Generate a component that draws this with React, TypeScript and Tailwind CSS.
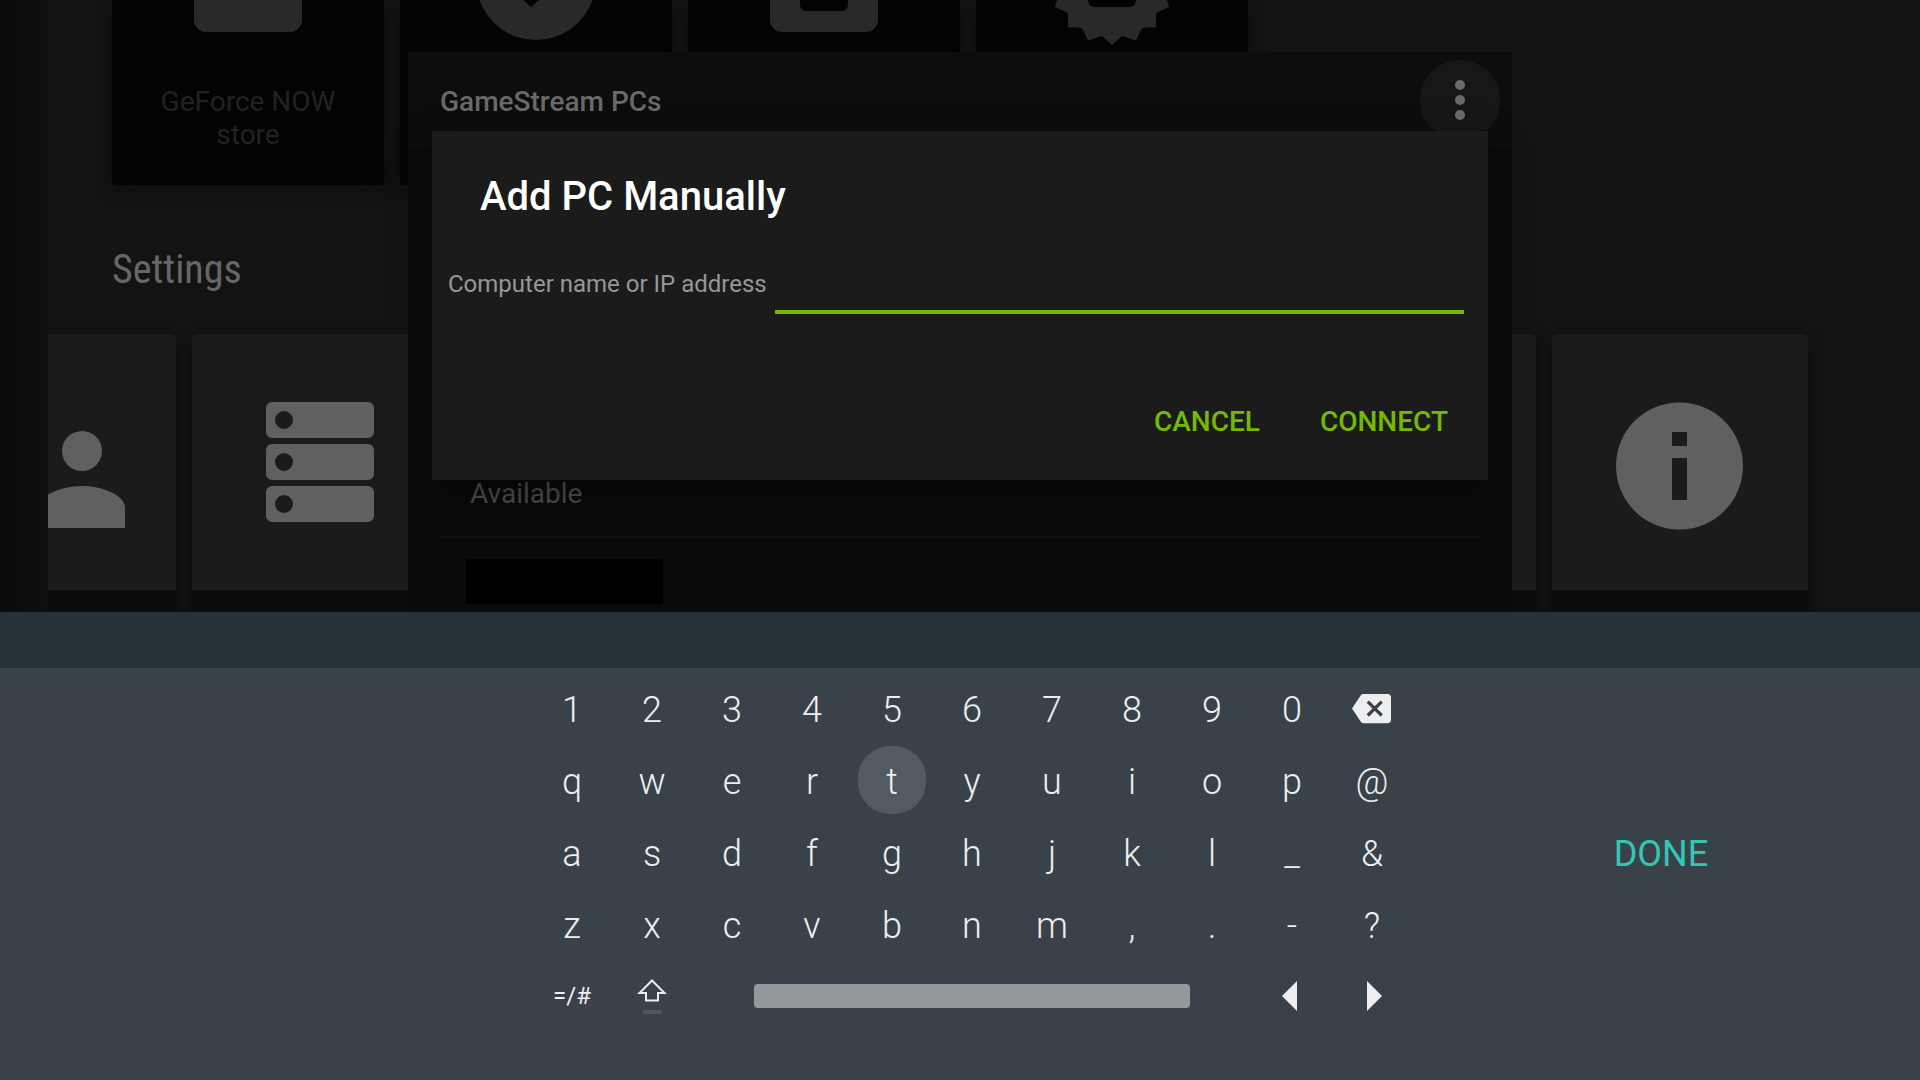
import React from "react";
import { MdBackspace } from "react-icons/md";

function BagIcon() {
  return (
    <svg className="h-12 w-36" viewBox="0 0 144 48" fill="currentColor" aria-hidden="true">
      <path d="M18 0H126V20a12 12 0 0 1-12 12H30a12 12 0 0 1-12-12Z" />
    </svg>
  );
}

function CheckIcon() {
  return (
    <svg className="h-12 w-36" viewBox="0 0 144 48" fill="currentColor" aria-hidden="true">
      <path d="M15.4 0A60 60 0 0 0 128.6 0H75L67 7 59 0Z" />
    </svg>
  );
}

function FrameIcon() {
  return (
    <svg className="h-12 w-36" viewBox="0 0 144 48" fill="currentColor" aria-hidden="true">
      <path d="M18 0H48V5a6 6 0 0 0 6 6H90a6 6 0 0 0 6-6V0H126V20a12 12 0 0 1-12 12H30a12 12 0 0 1-12-12Z" />
    </svg>
  );
}

function BadgeIcon() {
  return (
    <svg className="h-12 w-36" viewBox="0 0 144 48" fill="currentColor" aria-hidden="true">
      <path d="M17 0 15 7 28 13V27L42 28 48 40.500 62 36 72 45 82 36 96 40.500 102 28 116 27V13L129 7 127 0H96V1a6 6 0 0 1-6 6H54a6 6 0 0 1-6-6V0Z" />
    </svg>
  );
}

function AccountsIcon() {
  return (
    <svg className="h-[132px] w-[160px]" viewBox="0 0 160 132" fill="currentColor" aria-hidden="true">
      <circle cx="46" cy="36" r="20" />
      <circle cx="114" cy="51" r="20" />
      <path d="M71 128V108C71 94 96 86 114 86S157 94 157 108V128Z" />
    </svg>
  );
}

function StorageIcon() {
  return (
    <svg className="h-[132px] w-[132px]" viewBox="0 0 132 132" fill="currentColor" aria-hidden="true">
      {[2, 44, 86].map((y) => (
        <path
          key={y}
          fillRule="evenodd"
          d={`M18 ${y}H114a6 6 0 0 1 6 6v24a6 6 0 0 1-6 6H18a6 6 0 0 1-6-6v-24a6 6 0 0 1 6-6ZM30 ${y + 9}a9 9 0 1 0 0 18a9 9 0 0 0 0-18Z`}
        />
      ))}
    </svg>
  );
}

function InfoIcon() {
  return (
    <svg className="h-[132px] w-[132px]" viewBox="0 0 132 132" fill="currentColor" aria-hidden="true">
      <path
        fillRule="evenodd"
        d="M65.500 2.500a63.500 63.500 0 1 0 0 127a63.500 63.500 0 0 0 0-127ZM58 32H73V46H58ZM58 58H73V100H58Z"
      />
    </svg>
  );
}

function MoreIcon() {
  return (
    <svg className="size-10" viewBox="0 0 40 40" fill="currentColor" aria-hidden="true">
      <circle cx="20" cy="5" r="5" />
      <circle cx="20" cy="20" r="5" />
      <circle cx="20" cy="35" r="5" />
    </svg>
  );
}

const apps = [
  { label: "GeForce NOW store", icon: <BagIcon /> },
  { label: "", icon: <CheckIcon /> },
  { label: "", icon: <FrameIcon /> },
  { label: "", icon: <BadgeIcon /> },
];

const settings = [
  { name: "Accounts", icon: <AccountsIcon /> },
  { name: "Storage", icon: <StorageIcon /> },
  { name: "Setting 3", icon: null },
  { name: "Setting 4", icon: null },
  { name: "Setting 5", icon: null },
  { name: "Setting 6", icon: null },
  { name: "About", icon: <InfoIcon /> },
];

function Home() {
  return (
    <div className="flex h-full">
      <div className="w-12 shrink-0 bg-linear-to-r from-[#0b0b0b] to-[#0f0f0f]" />
      <div className="min-w-0 flex-1 overflow-hidden">
        <div className="flex gap-4 pl-16">
          {apps.map((app, i) => (
            <button
              key={i}
              aria-label={app.label || "App " + (i + 1)}
              className="flex h-[185px] w-[272px] shrink-0 flex-col items-center rounded-b bg-[#030303] text-[#292929] shadow-[0_6px_16px_rgba(0,0,0,0.4)]"
            >
              {app.icon}
              <span className="mt-[37px] w-48 text-center text-[28px] leading-[33px] text-[#222222]">
                {app.label}
              </span>
            </button>
          ))}
        </div>
        <h2 className="mt-[61px] pl-16 font-['Roboto_Condensed',Roboto,sans-serif] text-[40px] leading-12 text-[#676767]">
          Settings
        </h2>
        <div className="mt-10 -ml-32 flex gap-4">
          {settings.map((s) => (
            <button
              key={s.name}
              aria-label={s.name}
              className="flex h-[340px] w-64 shrink-0 flex-col overflow-hidden rounded bg-[#0c0c0c] shadow-[0_6px_16px_rgba(0,0,0,0.4)]"
            >
              <span className="flex h-64 w-full items-center justify-center bg-[#1b1b1b] pt-2 text-[#606060]">
                {s.icon}
              </span>
            </button>
          ))}
        </div>
      </div>
    </div>
  );
}

function PcPanel() {
  return (
    <section className="flex h-[560px] w-[1104px] flex-col bg-[#0a0a0a]">
      <header className="flex h-24 shrink-0 items-center justify-between bg-[#0d0d0d] pr-3 pl-8">
        <h2 className="pt-1 text-[28px] font-medium text-[#6a6a6a]">GameStream PCs</h2>
        <button
          aria-label="More options"
          className="flex size-20 items-center justify-center rounded-full bg-[#171717] text-[#6a6a6a]"
        >
          <MoreIcon />
        </button>
      </header>
      <div className="flex flex-1 flex-col justify-end px-[30px] pb-2">
        <h3 className="border-b-2 border-[#11110c] pb-[18px] pl-8 text-[28px] leading-12 text-[#505050]">
          Available
        </h3>
        <div className="mt-[21px] ml-7 h-[45px] w-[197px] bg-black" />
      </div>
    </section>
  );
}

function AddPcDialog() {
  return (
    <form
      role="dialog"
      aria-labelledby="add-pc-title"
      onSubmit={(e) => e.preventDefault()}
      className="w-[1056px] bg-[#1b1b1b] pt-[41px] pb-[34px] shadow-[0_16px_40px_rgba(0,0,0,0.4)]"
    >
      <h1 id="add-pc-title" className="pl-12 text-[40px] leading-[50px] font-medium text-white">
        Add PC Manually
      </h1>
      <div className="mt-8 flex items-center gap-2 pr-6 pl-4">
        <label htmlFor="pc-address" className="text-2xl text-[#979797]">
          Computer name or IP address
        </label>
        <input
          id="pc-address"
          type="text"
          className="h-[60px] min-w-0 flex-1 border-b-4 border-[#76b900] bg-transparent text-2xl text-white outline-none"
        />
      </div>
      <div className="mt-[84px] flex justify-end gap-3 pr-4 text-[28px] font-medium text-[#76b900]">
        <button type="button" className="h-12 px-6">
          CANCEL
        </button>
        <button type="submit" className="h-12 px-6">
          CONNECT
        </button>
      </div>
    </form>
  );
}

const letters = ["1234567890", "qwertyuiop@", "asdfghjkl_&", "zxcvbnm,.-?"];

function Key({
  label,
  active = false,
  children,
}: {
  label: string;
  active?: boolean;
  children: React.ReactNode;
}) {
  return (
    <button
      aria-label={label}
      className={
        active
          ? "flex size-[68px] items-center justify-center rounded-[32px] bg-[#535a61] pt-1"
          : "flex size-[68px] items-center justify-center pt-1"
      }
    >
      {children}
    </button>
  );
}

function Keyboard() {
  return (
    <div className="shrink-0">
      <div className="h-14 bg-[#273238]" />
      <div className="grid grid-cols-[1fr_880px_1fr] bg-[#3a4249] pt-1 pb-12 pl-6 text-[#eeeeee]">
        <div className="col-start-2 grid auto-rows-[72px] grid-cols-11 place-items-center text-4xl font-light">
          {letters.map((row, r) => (
            <React.Fragment key={row}>
              {row.split("").map((c) => (
                <Key key={c} label={c} active={c === "t"}>
                  {c}
                </Key>
              ))}
              {r === 0 && (
                <button aria-label="Backspace" className="flex size-[68px] items-center justify-center pr-px">
                  <MdBackspace className="size-[39px]" />
                </button>
              )}
            </React.Fragment>
          ))}
          <button aria-label="Symbols" className="flex size-[68px] items-center justify-center text-2xl font-normal">
            =/#
          </button>
          <button aria-label="Shift" className="flex size-[68px] items-center justify-center">
            <svg className="h-9 w-8" viewBox="0 0 32 36" fill="none" aria-hidden="true">
              <path
                d="M16 2.500 3.500 15H10V22.500H22V15H28.500Z"
                stroke="currentColor"
                strokeWidth="2"
              />
              <rect x="7" y="32" width="19" height="4" rx="1" fill="#4e555c" />
            </svg>
          </button>
          <button aria-label="Space" className="col-span-7 h-6 w-[436px] rounded bg-[#93989a]" />
          <button aria-label="Move left" className="flex size-[68px] items-center justify-center">
            <svg className="h-[30px] w-5" viewBox="0 0 20 30" fill="currentColor" aria-hidden="true">
              <path d="M15 0V30L0 15Z" />
            </svg>
          </button>
          <button aria-label="Move right" className="flex size-[68px] items-center justify-center">
            <svg className="h-[30px] w-5" viewBox="0 0 20 30" fill="currentColor" aria-hidden="true">
              <path d="M5 0V30L20 15Z" />
            </svg>
          </button>
        </div>
        <div className="flex items-center justify-center pt-1 pr-[10px]">
          <button className="text-4xl text-[#34c6b5]">DONE</button>
        </div>
      </div>
    </div>
  );
}

export default function App() {
  return (
    <div className="flex h-screen flex-col overflow-hidden bg-[#131313] font-[Roboto,sans-serif]">
      <main className="relative min-h-0 flex-1 overflow-hidden">
        <Home />
        <div className="absolute inset-x-0 top-[52px] flex justify-center">
          <PcPanel />
        </div>
        <div className="absolute inset-x-0 top-[131px] flex justify-center">
          <AddPcDialog />
        </div>
      </main>
      <Keyboard />
    </div>
  );
}
